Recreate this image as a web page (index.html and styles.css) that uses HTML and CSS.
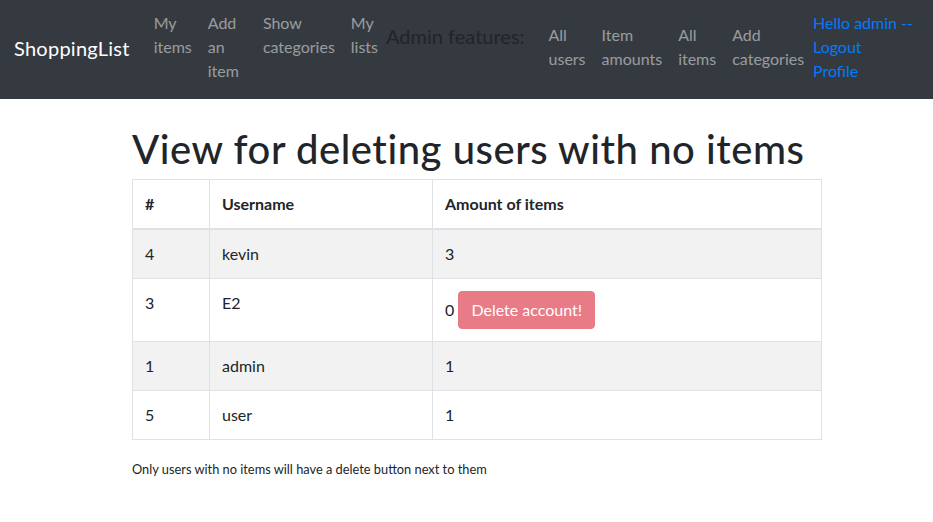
FILE: index.html
```html
<!DOCTYPE html>
<html lang="en">
<head>
<meta charset="utf-8">
<title>ShoppingList</title>
<link rel="stylesheet" href="styles.css">
</head>
<body>
<nav class="navbar">
  <a class="brand" href="#">ShoppingList</a>
  <ul class="nav-list">
    <li><a class="nav-link" href="#">My items</a></li>
    <li><a class="nav-link nav-link-wide" href="#">Add an item</a></li>
    <li><a class="nav-link" href="#">Show categories</a></li>
    <li><a class="nav-link" href="#">My lists</a></li>
  </ul>
  <span class="admin-label">Admin features:</span>
  <ul class="nav-list admin-list">
    <li><a class="nav-link" href="#">All users</a></li>
    <li><a class="nav-link" href="#">Item amounts</a></li>
    <li><a class="nav-link" href="#">All items</a></li>
    <li><a class="nav-link" href="#">Add categories</a></li>
  </ul>
  <div class="user-box">
    <a class="user-link" href="#">Hello admin -- Logout</a>
    <a class="user-link" href="#">Profile</a>
  </div>
</nav>
<main class="container">
  <h1 class="title">View for deleting users with no items</h1>
  <table class="table">
    <thead>
      <tr>
        <th class="col-id">#</th>
        <th class="col-name">Username</th>
        <th>Amount of items</th>
      </tr>
    </thead>
    <tbody>
      <tr><td>4</td><td>kevin</td><td>3</td></tr>
      <tr><td>3</td><td>E2</td><td>0 <button class="btn-danger" disabled>Delete account!</button></td></tr>
      <tr><td>1</td><td>admin</td><td>1</td></tr>
      <tr><td>5</td><td>user</td><td>1</td></tr>
    </tbody>
  </table>
  <p class="note">Only users with no items will have a delete button next to them</p>
</main>
</body>
</html>
```
FILE: styles.css
```css
* { box-sizing: border-box; }
body {
  margin: 0;
  font-family: "Segoe UI", Lato, "Liberation Sans", sans-serif;
  font-size: 16px;
  line-height: 1.5;
  color: #212529;
  background: #fff;
}
a { text-decoration: none; }

.navbar {
  display: flex;
  align-items: flex-start;
  height: 99px;
  background: #343a40;
  padding: 11px 16px 0 14px;
}
.brand {
  color: #fff;
  font-size: 20px;
  line-height: 30px;
  letter-spacing: 0.25px;
  margin-top: 22px;
  margin-right: 16px;
}
.nav-list {
  display: flex;
  list-style: none;
  margin: 0;
  padding: 0;
}
.nav-link {
  display: block;
  width: min-content;
  padding: 0 8px;
  color: rgba(255, 255, 255, 0.5);
  line-height: 24px;
}
.nav-link-wide { padding-right: 16px; }
.admin-label {
  font-size: 20px;
  line-height: 24px;
  margin-top: 13px;
  color: #212529;
  margin-right: 16px;
}
.admin-list { margin-top: 12px; }
.user-box {
  display: flex;
  flex-direction: column;
  margin-left: auto;
  width: 104px;
}
.user-link {
  color: #007bff;
  line-height: 24px;
}

.container {
  width: 690px;
  margin: 0 0 0 132px;
  padding-top: 26px;
}
.title {
  font-size: 40px;
  font-weight: 500;
  line-height: 48px;
  letter-spacing: 0.55px;
  margin: 0 0 6px;
}
.table {
  width: 100%;
  border-collapse: collapse;
  margin-bottom: 16px;
}
.table th,
.table td {
  border: 1px solid #dee2e6;
  padding: 12px;
  text-align: left;
  vertical-align: top;
  line-height: 24px;
}
.table thead th {
  border-bottom-width: 2px;
  font-weight: 700;
}
.table tbody tr:nth-child(odd) { background: #f2f2f2; }
.col-id { width: 77px; }
.col-name { width: 223px; }
.btn-danger {
  font-family: inherit;
  font-size: 16px;
  line-height: 24px;
  padding: 6px 12px;
  border: 1px solid #dc3545;
  border-radius: 4px;
  background: #dc3545;
  color: #fff;
  opacity: 0.65;
}
.note {
  font-size: 12.8px;
  line-height: 19px;
  margin: 0;
  padding-top: 4px;
}
```
